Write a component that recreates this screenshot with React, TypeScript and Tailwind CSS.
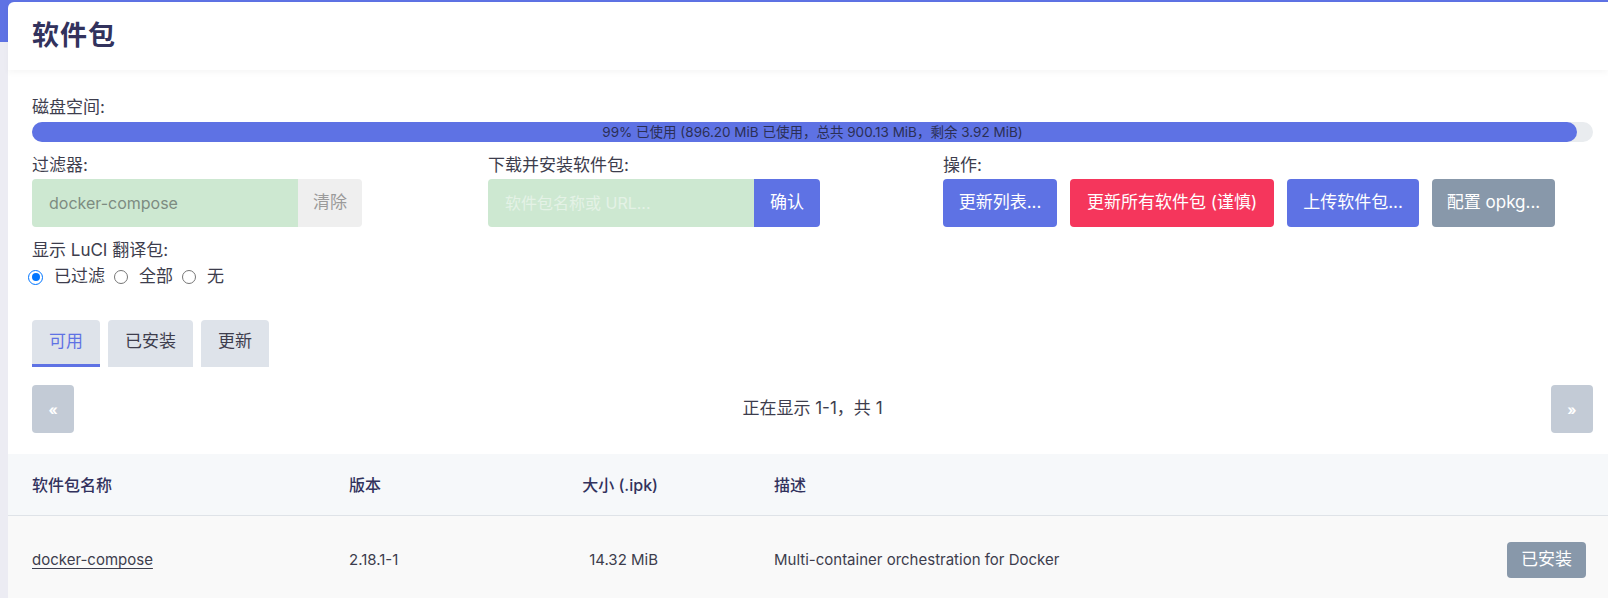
import { useState } from 'react';

const FONT = "font-['Inter','Noto_Sans_CJK_SC',sans-serif]";

const ACTIONS = [
  { label: '更新列表...', cls: 'bg-[#5e72e4] w-[114px]' },
  { label: '更新所有软件包 (谨慎)', cls: 'bg-[#f5365c] w-[204px]' },
  { label: '上传软件包...', cls: 'bg-[#5e72e4] w-[132px]' },
  { label: '配置 opkg...', cls: 'bg-[#8898aa] w-[123px]' },
];

const Radio = ({ checked }: { checked?: boolean }) =>
  checked ? (
    <span className="w-[15px] h-[15px] rounded-full border-[1.5px] border-[#0075ff] flex items-center justify-center bg-white">
      <span className="w-[8px] h-[8px] rounded-full bg-[#0075ff]" />
    </span>
  ) : (
    <span className="w-[14px] h-[14px] rounded-full border border-[#767676] bg-white" />
  );

export default function App() {
  const [tab, setTab] = useState('可用');
  const [lang, setLang] = useState('filtered');

  return (
    <div
      className={`${FONT} min-h-[598px] w-[1608px] bg-[linear-gradient(#5e72e4_0px,#5e72e4_42px,#ececf3_42px)] pt-[2px] pl-2 overflow-hidden`}
    >
      <div className="bg-white rounded-tl-[6px] min-h-[596px]">
        {/* header */}
        <div className="h-[68px] pl-6 flex items-center shadow-[0_3px_6px_rgba(0,0,0,0.035)]">
          <h1 className="text-[27px] font-bold text-[#32325d] tracking-[1px]">软件包</h1>
        </div>

        <div className="pl-6 pr-[15px] pt-[26px] text-[#3d3d4d]">
          <div className="text-[17px] leading-[22px]">磁盘空间:</div>
          <div className="relative mt-[4px] h-[20px] rounded-full bg-[#e9ecef]">
            <div className="h-full w-[99%] rounded-full bg-[#5e72e4]" />
            <div className="absolute inset-0 flex items-center justify-center text-[13.5px] text-[#2b2f55]">
              99% 已使用 (896.20 MiB 已使用，总共 900.13 MiB，剩余 3.92 MiB)
            </div>
          </div>

          <div className="grid grid-cols-[456px_455px_1fr] mt-[12px]">
            <div>
              <div className="text-[17px] leading-[22px]">过滤器:</div>
              <div className="flex mt-[3px] h-[48px]">
                <div className="w-[266px] bg-[#cde8d1] rounded-l-[4px] flex items-center pl-[17px] text-[16px] text-[#7d8c81]">
                  docker-compose
                </div>
                <button className="w-[64px] bg-[#efefef] rounded-r-[4px] text-[17px] text-[#9a9a9a]">清除</button>
              </div>
            </div>
            <div>
              <div className="text-[17px] leading-[22px]">下载并安装软件包:</div>
              <div className="flex mt-[3px] h-[48px]">
                <div className="w-[266px] bg-[#cde8d1] rounded-l-[4px] flex items-center pl-[17px] text-[16px] text-[#e4f2e6]">
                  软件包名称或 URL...
                </div>
                <button className="w-[66px] bg-[#5e72e4] rounded-r-[4px] text-[17px] text-white">确认</button>
              </div>
            </div>
            <div>
              <div className="text-[17px] leading-[22px]">操作:</div>
              <div className="flex gap-[13px] mt-[3px]">
                {ACTIONS.map(a => (
                  <button
                    key={a.label}
                    className={`${a.cls} h-[48px] rounded-[4px] text-[17px] text-white whitespace-nowrap`}
                  >
                    {a.label}
                  </button>
                ))}
              </div>
            </div>
          </div>

          <div className="text-[17px] leading-[22px] mt-[12px]">显示 LuCI 翻译包:</div>
          <div className="flex items-center h-[22px] mt-[5px] -ml-[4px] text-[17px]">
            {[
              ['filtered', '已过滤'],
              ['all', '全部'],
              ['none', '无'],
            ].map(([k, l], i) => (
              <label
                key={k}
                onClick={() => setLang(k)}
                className={`flex items-center gap-[11px] ${i > 0 ? 'ml-[9px]' : ''}`}
              >
                <Radio checked={lang === k} />
                <span>{l}</span>
              </label>
            ))}
          </div>

          <div className="flex gap-2 mt-[32px]">
            {['可用', '已安装', '更新'].map(t => (
              <button
                key={t}
                onClick={() => setTab(t)}
                className={`h-[47px] px-[17px] rounded-t-[4px] bg-[#dee3ea] text-[17px] border-b-[3px] ${
                  tab === t ? 'text-[#5e72e4] border-[#5e72e4]' : 'text-[#3d3d4d] border-transparent'
                }`}
              >
                {t}
              </button>
            ))}
          </div>

          <div className="flex items-center justify-between mt-[18px]">
            <button className="w-[42px] h-[48px] rounded-[4px] bg-[#c3cbd6] text-white text-[14px] font-bold">«</button>
            <div className="text-[17px] text-[#3d3d4d]">正在显示 1-1，共 1</div>
            <button className="w-[42px] h-[48px] rounded-[4px] bg-[#c3cbd6] text-white text-[14px] font-bold">»</button>
          </div>
        </div>

        {/* table */}
        <div className="mt-[21px]">
          <div className="flex items-center h-[62px] pl-6 bg-[#f6f8fa] border-b border-[#dfe3e8] text-[16px] font-medium text-[#32325d]">
            <div className="w-[317px]">软件包名称</div>
            <div className="w-[205px]">版本</div>
            <div className="w-[104px] text-right">大小 (.ipk)</div>
            <div className="pl-[116px]">描述</div>
          </div>
          <div className="flex items-center h-[88px] pl-6 pr-[22px] bg-[#f9f9f9] text-[15px] text-[#3d3d4d]">
            <div className="w-[317px]">
              <a className="underline underline-offset-[3px] text-[#3d3d4d]">docker-compose</a>
            </div>
            <div className="w-[205px]">2.18.1-1</div>
            <div className="w-[104px] text-right">14.32 MiB</div>
            <div className="pl-[116px] flex-1">Multi-container orchestration for Docker</div>
            <button className="w-[79px] h-[36px] rounded-[4px] bg-[#8898aa] text-white text-[17px]">已安装</button>
          </div>
        </div>
      </div>
    </div>
  );
}
